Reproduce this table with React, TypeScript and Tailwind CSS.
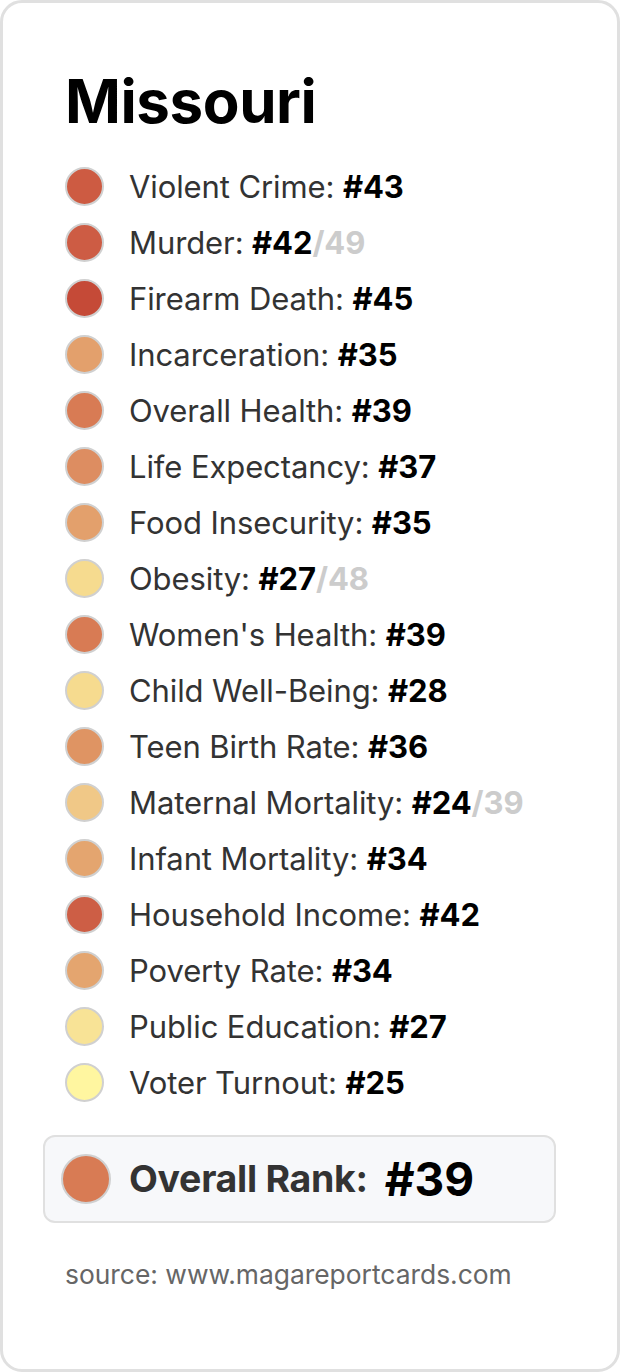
import React from "react";

type Row = { label: string; rank: number; of?: number; color: string };

const rows: Row[] = [
  { label: "Violent Crime", rank: 43, color: "#cd5b42" },
  { label: "Murder", rank: 42, of: 49, color: "#cd5c44" },
  { label: "Firearm Death", rank: 45, color: "#c54a37" },
  { label: "Incarceration", rank: 35, color: "#e3a06c" },
  { label: "Overall Health", rank: 39, color: "#d87b54" },
  { label: "Life Expectancy", rank: 37, color: "#dd8d61" },
  { label: "Food Insecurity", rank: 35, color: "#e3a06c" },
  { label: "Obesity", rank: 27, of: 48, color: "#f6db8f" },
  { label: "Women's Health", rank: 39, color: "#d87b54" },
  { label: "Child Well-Being", rank: 28, color: "#f6db8f" },
  { label: "Teen Birth Rate", rank: 36, color: "#df9463" },
  { label: "Maternal Mortality", rank: 24, of: 39, color: "#f0c887" },
  { label: "Infant Mortality", rank: 34, color: "#e4a56f" },
  { label: "Household Income", rank: 42, color: "#cd5e45" },
  { label: "Poverty Rate", rank: 34, color: "#e4a56f" },
  { label: "Public Education", rank: 27, color: "#f8e396" },
  { label: "Voter Turnout", rank: 25, color: "#fff6a0" },
];

export default function App() {
  return (
    <div
      className="w-[620px] h-[1372px] bg-white border-[3px] border-[#e0e0e0] rounded-[22px] px-[40px] pt-[68px]"
      style={{ fontFamily: "Inter, 'Noto Sans', sans-serif" }}
    >
      <h1 className="pl-[22px] text-[60px] leading-[60px] font-bold text-black tracking-[-0.4px]">
        Missouri
      </h1>
      <div className="pl-[22px] mt-[27px] flex flex-col">
        {rows.map((r) => (
          <div key={r.label} className="h-14 flex items-center">
            <div
              className="w-[39px] h-[39px] rounded-full border-2 border-[#d0d0d0] shrink-0"
              style={{ backgroundColor: r.color }}
            />
            <div className="ml-[25px] text-[31px] leading-none text-[#333333] whitespace-nowrap tracking-[-0.1px]">
              {r.label}: <span className="font-bold text-black">#{r.rank}</span>
              {r.of ? <span className="font-bold text-[#cccccc]">/{r.of}</span> : null}
            </div>
          </div>
        ))}
      </div>
      <div className="mt-[25px] w-[513px] h-[88px] bg-[#f7f8fa] border-2 border-[#e0e0e0] rounded-[12px] flex items-center pl-[16px]">
        <div className="w-[50px] h-[50px] rounded-full border-2 border-[#d0d0d0] bg-[#d87b54] shrink-0" />
        <span className="ml-[18px] text-[37.5px] leading-none font-bold text-[#333333] tracking-[-0.3px]">
          Overall Rank:
        </span>
        <span className="ml-[17px] text-[46px] leading-none font-bold text-black">#39</span>
      </div>
      <div className="pl-[22px] mt-[33px] text-[26.4px] leading-[36px] text-[#666666]">
        source: www.magareportcards.com
      </div>
    </div>
  );
}
